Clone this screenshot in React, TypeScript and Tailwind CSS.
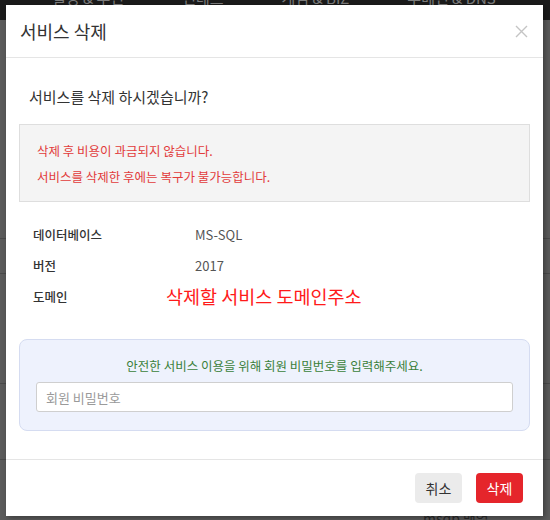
import React from "react";

const navItems = ["빌딩 & 무인", "인테스", "게임 & BIZ", "루메인 & DNS"];

function CloseIcon() {
  return (
    <svg width="13" height="13" viewBox="0 0 13 13" fill="none">
      <path d="M1 1L12 12M12 1L1 12" stroke="#c4c4c4" strokeWidth="1.4" />
    </svg>
  );
}

export default function App() {
  return (
    <div className="relative h-[520px] w-[550px] overflow-hidden bg-[#5b5b5b] font-['Noto_Sans_CJK_KR','Noto_Sans',sans-serif]">
      {/* page behind the backdrop */}
      <div className="flex h-[20px] items-end gap-[58px] bg-[#1b1b1b] pl-[52px] text-[15px] leading-[20px] text-[#7d7d7d]">
        {navItems.map((n) => (
          <span key={n} className="translate-y-[-12px]">
            {n}
          </span>
        ))}
      </div>
      <div className="h-[218px]" />
      <div className="h-[35px] border-t border-[#4a4a4a]" />
      <div className="h-[110px] border-t border-[#4a4a4a]" />
      <div className="h-[76px] border-t border-[#4a4a4a]" />
      <div className="flex h-[61px] items-end border-t border-[#4a4a4a] pl-[423px] text-[14px] leading-[20px] text-[#2a2a2a]">
        <span className="translate-y-[8px]">msdb 백업</span>
      </div>

      {/* modal */}
      <div className="absolute left-[6px] top-[5px] flex h-[511px] w-[537px] flex-col bg-white shadow-[2px_2px_6px_rgba(0,0,0,0.35)]">
        <div className="flex h-[53px] shrink-0 items-center justify-between border-b border-[#e5e5e5] pl-[14px] pr-[12px]">
          <h2 className="text-[18px] leading-[26px] text-[#333]">서비스 삭제</h2>
          <button className="flex h-[20px] w-[20px] items-center justify-center">
            <CloseIcon />
          </button>
        </div>

        <div className="flex-1 px-[13px] pt-[28px]">
          <p className="pl-[10px] text-[15px] leading-[22px] text-[#333]">서비스를 삭제 하시겠습니까?</p>

          <div className="mt-[16px] h-[78px] border border-[#dedede] bg-[#f4f4f4] pl-[17px] pt-[13px] text-[12.5px] leading-[26px] text-[#e23b3b]">
            <p>삭제 후 비용이 과금되지 않습니다.</p>
            <p>서비스를 삭제한 후에는 복구가 불가능합니다.</p>
          </div>

          <div className="mt-[17px] grid grid-cols-[133px_1fr] pl-[14px] text-[12.5px] leading-[31px]">
            <div className="font-medium text-[#333]">데이터베이스</div>
            <div className="pl-[29px] text-[13px] text-[#555]">MS-SQL</div>
            <div className="font-medium text-[#333]">버전</div>
            <div className="pl-[29px] text-[13px] text-[#555]">2017</div>
            <div className="font-medium text-[#333]">도메인</div>
            <div className="text-[18.5px] text-[#ff1a1a]">삭제할 서비스 도메인주소</div>
          </div>

          <div className="mt-[27px] h-[92px] rounded-[8px] border border-[#d5dcf1] bg-[#eef2fd] px-[16px] pt-[16px]">
            <p className="text-center text-[12.5px] leading-[20px] text-[#3a7f3a]">
              안전한 서비스 이용을 위해 회원 비밀번호를 입력해주세요.
            </p>
            <input
              type="password"
              placeholder="회원 비밀번호"
              className="mt-[6px] h-[30px] w-full rounded-[3px] border border-[#cfcfcf] bg-white px-[9px] text-[13px] text-[#333] outline-none placeholder:text-[#9a9a9a]"
            />
          </div>
        </div>

        <div className="flex h-[57px] shrink-0 justify-end gap-[14px] border-t border-[#e5e5e5] pr-[20px] pt-[13px]">
          <button className="h-[30px] w-[47px] rounded-[4px] bg-[#ebebeb] text-[14px] text-[#333]">취소</button>
          <button className="h-[30px] w-[47px] rounded-[4px] bg-[#e5252b] text-[14px] text-white">삭제</button>
        </div>
      </div>
    </div>
  );
}
